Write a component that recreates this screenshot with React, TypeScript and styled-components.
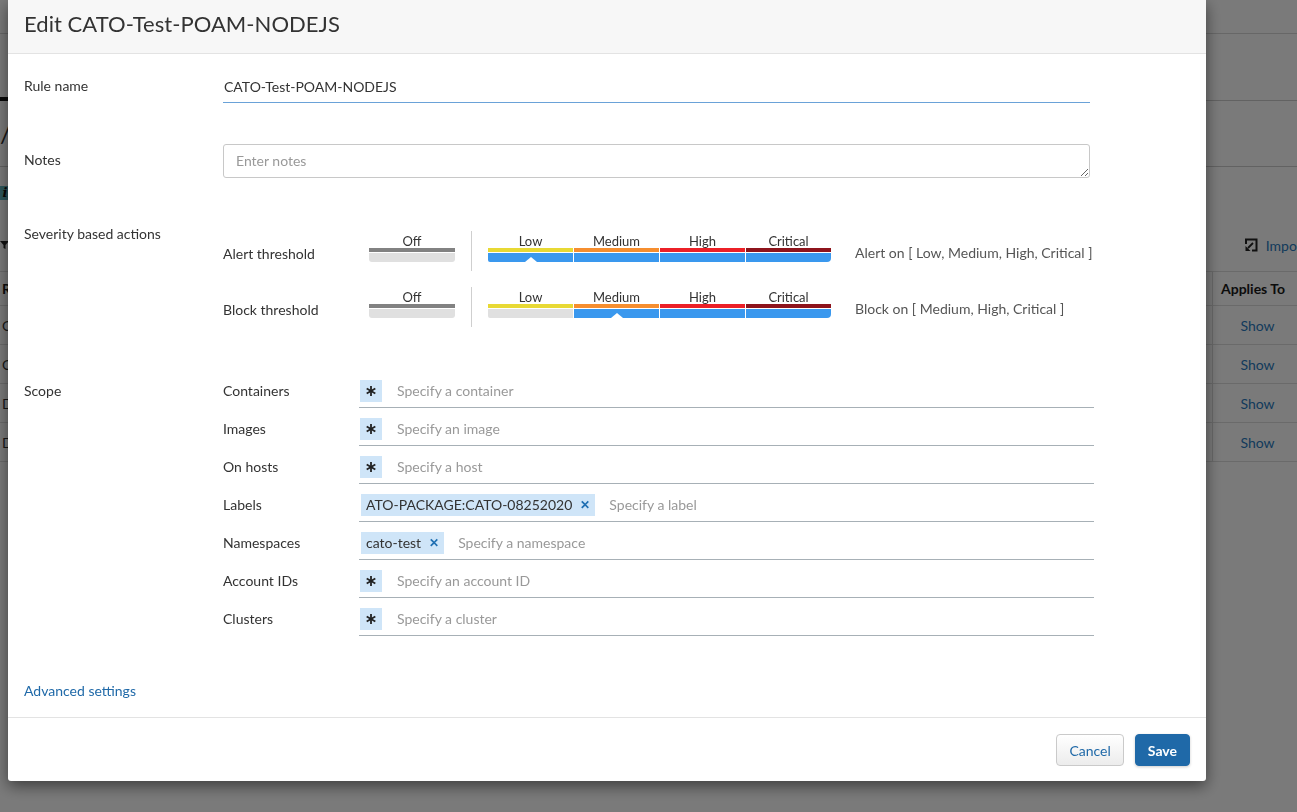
import React from "react";
import styled, { createGlobalStyle } from "styled-components";

const GlobalStyle = createGlobalStyle`
  html, body { margin: 0; padding: 0; }
  body {
    font-family: Lato, "Open Sans", "Liberation Sans", sans-serif;
    font-size: 14px;
    color: #333;
    overflow: hidden;
    background: #fff;
  }
  * { box-sizing: border-box; }
`;

/* ---------- background page ---------- */
const Page = styled.div`
  width: 1340px;
  height: 812px;
  overflow: hidden;
  background: #fff;
  display: flex;
  flex-direction: column;
`;
const PageTop = styled.div`
  flex: none;
  height: 34px;
  border-bottom: 1px solid #d8d8d8;
`;
const Tabs = styled.div`
  flex: none;
  height: 67px;
  border-bottom: 1px solid #ccc;
  display: flex;
  align-items: flex-end;
`;
const ActiveTab = styled.div`
  width: 140px;
  height: 4px;
  background: #111;
  margin-bottom: -1px;
`;
const TitleRow = styled.div`
  flex: none;
  height: 66px;
  border-bottom: 1px solid #ccc;
  display: flex;
  align-items: center;
  font-size: 24px;
  color: #333;
`;
const Banner = styled.div`
  flex: none;
  margin-top: 18px;
  height: 15px;
  display: flex;
  align-items: center;
`;
const InfoIcon = styled.span`
  width: 10px;
  height: 14px;
  background: #5fb5bf;
  color: #111;
  font-style: italic;
  font-weight: 900;
  font-size: 13px;
  line-height: 14px;
  font-family: "DejaVu Serif", serif;
  display: flex;
  align-items: center;
  justify-content: center;
`;
const Toolbar = styled.div`
  flex: none;
  margin-top: 34px;
  height: 22px;
  display: flex;
  align-items: center;
  justify-content: space-between;
  padding-right: 33px;
`;
const ImportLink = styled.span`
  display: flex;
  align-items: center;
  gap: 8px;
  color: #2a7bc0;
  font-size: 14px;
`;
const Table = styled.div`
  flex: none;
  margin-top: 15px;
  border-top: 1px solid #ddd;
`;
const TRow = styled.div<{ $head?: boolean }>`
  display: grid;
  grid-template-columns: 1212px 90px 38px;
  height: ${(p) => (p.$head ? "34px" : "39px")};
  border-bottom: 1px solid #ddd;
  font-weight: ${(p) => (p.$head ? 700 : 400)};
  color: ${(p) => (p.$head ? "#1a1a1a" : "#333")};
`;
const TCell = styled.div<{ $center?: boolean; $line?: boolean; $pl?: number }>`
  display: flex;
  align-items: center;
  justify-content: ${(p) => (p.$center ? "center" : "flex-start")};
  padding-left: ${(p) => p.$pl ?? 2}px;
  border-left: ${(p) => (p.$line ? "1px solid #ddd" : "none")};
  white-space: nowrap;
  overflow: hidden;
`;
const ShowLink = styled.span`
  color: #2a7bc0;
`;

const Backdrop = styled.div`
  position: fixed;
  inset: 0;
  background: rgba(0, 0, 0, 0.52);
`;

/* ---------- modal ---------- */
const Modal = styled.div`
  position: fixed;
  top: 0;
  left: 8px;
  width: 1198px;
  background: #fff;
  border-radius: 0 0 3px 3px;
  box-shadow: 0 5px 15px rgba(0, 0, 0, 0.5);
  display: flex;
  flex-direction: column;
`;
const Header = styled.div`
  height: 54px;
  padding: 10px 16px 0;
  background: #f7f7f7;
  border-bottom: 1px solid #e3e3e3;
`;
const Title = styled.h4`
  margin: 0;
  font-size: 22px;
  line-height: 28px;
  font-weight: 400;
  color: #333;
  letter-spacing: 0.05px;
`;
const Body = styled.div`
  padding: 17px 16px 17px;
  display: flex;
  flex-direction: column;
`;
const FormRow = styled.div<{ $mt?: number; $center?: boolean }>`
  display: grid;
  grid-template-columns: 199px 1fr;
  align-items: ${(p) => (p.$center ? "center" : "start")};
  margin-top: ${(p) => p.$mt ?? 0}px;
`;
const Label = styled.div<{ $mt?: number; $pb?: number }>`
  font-size: 14px;
  line-height: 17px;
  color: #333;
  margin-top: ${(p) => p.$mt ?? 0}px;
  padding-bottom: ${(p) => p.$pb ?? 0}px;
`;
const TextInput = styled.input`
  width: 867px;
  height: 32px;
  border: none;
  border-bottom: 1px solid #6aa2d8;
  outline: none;
  padding: 0 1px;
  font-family: inherit;
  font-size: 14px;
  color: #333;
  background: transparent;
`;
const NotesArea = styled.textarea`
  width: 867px;
  height: 34px;
  border: 1px solid #c8c8c8;
  border-radius: 3px;
  padding: 6px 12px;
  font-family: inherit;
  font-size: 14px;
  line-height: 20px;
  color: #333;
  resize: vertical;
  display: block;
  &::placeholder { color: #999; }
`;
const SevContent = styled.div`
  padding-top: 5px;
  display: flex;
  flex-direction: column;
  gap: 16px;
`;
const SevRow = styled.div`
  display: flex;
  height: 40px;
`;
const SevLabel = styled.div`
  width: 146px;
  padding-top: 14px;
  line-height: 17px;
  font-size: 14px;
`;
const Slider = styled.div`
  display: flex;
  gap: 1px;
`;
const Segment = styled.div`
  width: 85px;
  display: flex;
  flex-direction: column;
  padding-top: 3px;
`;
const OffSegment = styled(Segment)`
  width: 86px;
`;
const SegLabel = styled.div`
  font-size: 13px;
  line-height: 14px;
  height: 14px;
  text-align: center;
  color: #333;
`;
const TopBar = styled.div<{ $color: string }>`
  height: 4px;
  background: ${(p) => p.$color};
`;
const BottomBar = styled.div<{ $on: boolean; $radius: string }>`
  position: relative;
  margin-top: 1px;
  height: 9px;
  background: ${(p) => (p.$on ? "#3a98ee" : "#e0e0e0")};
  border-radius: ${(p) => p.$radius};
`;
const Notch = styled.span`
  position: absolute;
  left: 50%;
  bottom: 0;
  margin-left: -6px;
  width: 0;
  height: 0;
  border-left: 6px solid transparent;
  border-right: 6px solid transparent;
  border-bottom: 5px solid #fff;
`;
const Divider = styled.div`
  width: 1px;
  background: #cfcfcf;
  margin: 0 16px;
`;
const SevText = styled.div`
  margin-left: 24px;
  padding-top: 13px;
  line-height: 17px;
  font-size: 14px;
  color: #555;
`;
const ScopeList = styled.div`
  display: flex;
  flex-direction: column;
`;
const ScopeRow = styled.div`
  display: flex;
`;
const ScopeLabel = styled.div`
  width: 136px;
  padding-top: 12px;
  line-height: 17px;
  font-size: 14px;
`;
const ScopeInput = styled.div`
  width: 735px;
  height: 38px;
  padding: 10px 0 5px 1px;
  border-bottom: 1px solid #a7b0b6;
  display: flex;
  align-items: center;
`;
const StarChip = styled.span`
  width: 22px;
  height: 22px;
  background: #cfe5f8;
  display: flex;
  align-items: center;
  justify-content: center;
  flex: none;
`;
const TagChip = styled.span`
  height: 22px;
  background: #cfe5f8;
  padding: 0 5px;
  margin-left: 1px;
  display: flex;
  align-items: center;
  font-size: 14px;
  line-height: 22px;
  color: #333;
  flex: none;
`;
const TagX = styled.span`
  margin-left: 8px;
  color: #1f6fb2;
  font-weight: 700;
  font-size: 12px;
`;
const Placeholder = styled.span<{ $ml?: number }>`
  margin-left: ${(p) => p.$ml ?? 15}px;
  color: #999;
  font-size: 14px;
  line-height: 20px;
  margin-top: -0.5px;
`;
const AdvancedLink = styled.a`
  margin-top: 46px;
  line-height: 17px;
  padding-bottom: 1px;
  font-size: 14px;
  color: #1f69a8;
  text-decoration: none;
  align-self: flex-start;
`;
const Footer = styled.div`
  border-top: 1px solid #e3e3e3;
  padding: 16px 16px 15px;
  display: flex;
  justify-content: flex-end;
  gap: 11px;
`;
const Button = styled.button<{ $primary?: boolean }>`
  height: 32px;
  padding: 0 12px;
  border-radius: 4px;
  font-family: inherit;
  font-size: 14px;
  font-weight: ${(p) => (p.$primary ? 700 : 400)};
  color: ${(p) => (p.$primary ? "#fff" : "#1f69a8")};
  background: ${(p) => (p.$primary ? "#1f69a8" : "linear-gradient(#ffffff, #ececec)")};
  border: 1px solid ${(p) => (p.$primary ? "#1f69a8" : "#cacaca")};
  box-shadow: ${(p) => (p.$primary ? "0 1px 3px rgba(0,0,0,0.2)" : "none")};
`;

const Star = () => (
  <svg width="10" height="10" viewBox="0 0 10 10">
    <g stroke="#222" strokeWidth="1.8" strokeLinecap="butt">
      <line x1="5" y1="0" x2="5" y2="10" />
      <line x1="0.7" y1="2.5" x2="9.3" y2="7.5" />
      <line x1="0.7" y1="7.5" x2="9.3" y2="2.5" />
    </g>
  </svg>
);

const FilterIcon = () => (
  <svg width="10" height="10" viewBox="0 0 10 10">
    <path d="M0 1 H9 L5.5 5 V9 L3.5 8 V5 Z" fill="#222" />
  </svg>
);

const ImportIcon = () => (
  <svg width="14" height="14" viewBox="0 0 14 14">
    <path d="M2 6 V1.5 H12.5 V12.5 H8" fill="none" stroke="#222" strokeWidth="2" />
    <path d="M9 5 L4 10" stroke="#222" strokeWidth="1.8" />
    <path d="M1.5 8 V13 H6.5 Z" fill="#222" />
  </svg>
);

const LEVELS = [
  { name: "Low", color: "#e8d934" },
  { name: "Medium", color: "#f68e2f" },
  { name: "High", color: "#ec2027" },
  { name: "Critical", color: "#8e141c" },
];

const Threshold = ({ label, level, text }: { label: string; level: number; text: string }) => (
  <SevRow>
    <SevLabel>{label}</SevLabel>
    <OffSegment>
      <SegLabel>Off</SegLabel>
      <TopBar $color="#828282" />
      <BottomBar $on={false} $radius="0 0 3px 3px" />
    </OffSegment>
    <Divider />
    <Slider>
      {LEVELS.map((l, i) => (
        <Segment key={l.name}>
          <SegLabel>{l.name}</SegLabel>
          <TopBar $color={l.color} />
          <BottomBar
            $on={i >= level}
            $radius={i === 0 ? "0 0 0 2px" : i === LEVELS.length - 1 ? "0 0 4px 0" : "0"}
          >
            {i === level && <Notch />}
          </BottomBar>
        </Segment>
      ))}
    </Slider>
    <SevText>{text}</SevText>
  </SevRow>
);

type Scope = { label: string; tag?: string; placeholder: string };
const SCOPES: Scope[] = [
  { label: "Containers", placeholder: "Specify a container" },
  { label: "Images", placeholder: "Specify an image" },
  { label: "On hosts", placeholder: "Specify a host" },
  { label: "Labels", tag: "ATO-PACKAGE:CATO-08252020", placeholder: "Specify a label" },
  { label: "Namespaces", tag: "cato-test", placeholder: "Specify a namespace" },
  { label: "Account IDs", placeholder: "Specify an account ID" },
  { label: "Clusters", placeholder: "Specify a cluster" },
];

const ROWS = ["CATO", "CATO", "Def", "Def"];

export default function App() {
  return (
    <>
      <GlobalStyle />
      <Page>
        <PageTop />
        <Tabs>
          <ActiveTab />
        </Tabs>
        <TitleRow>/ Runtime Policies</TitleRow>
        <Banner>
          <InfoIcon>i</InfoIcon>
        </Banner>
        <Toolbar>
          <FilterIcon />
          <ImportLink>
            <ImportIcon />
            Import
          </ImportLink>
        </Toolbar>
        <Table>
          <TRow $head>
            <TCell>Rule</TCell>
            <TCell $line $pl={8}>Applies To</TCell>
            <TCell />
          </TRow>
          {ROWS.map((r, i) => (
            <TRow key={i}>
              <TCell>{r}</TCell>
              <TCell $line $center $pl={0}>
                <ShowLink>Show</ShowLink>
              </TCell>
              <TCell />
            </TRow>
          ))}
        </Table>
      </Page>
      <Backdrop />
      <Modal>
        <Header>
          <Title>Edit CATO-Test-POAM-NODEJS</Title>
        </Header>
        <Body>
          <FormRow $center>
            <Label $pb={4}>Rule name</Label>
            <TextInput defaultValue="CATO-Test-POAM-NODEJS" />
          </FormRow>
          <FormRow $center $mt={41}>
            <Label $pb={4}>Notes</Label>
            <NotesArea placeholder="Enter notes" />
          </FormRow>
          <FormRow $mt={48}>
            <Label $mt={-1}>Severity based actions</Label>
            <SevContent>
              <Threshold label="Alert threshold" level={0} text="Alert on [ Low, Medium, High, Critical ]" />
              <Threshold label="Block threshold" level={1} text="Block on [ Medium, High, Critical ]" />
            </SevContent>
          </FormRow>
          <FormRow $mt={43}>
            <Label $mt={12}>Scope</Label>
            <ScopeList>
              {SCOPES.map((s) => (
                <ScopeRow key={s.label}>
                  <ScopeLabel>{s.label}</ScopeLabel>
                  <ScopeInput>
                    {s.tag ? (
                      <TagChip>
                        {s.tag}
                        <TagX>✕</TagX>
                      </TagChip>
                    ) : (
                      <StarChip>
                        <Star />
                      </StarChip>
                    )}
                    <Placeholder $ml={s.tag ? 14 : 15}>{s.placeholder}</Placeholder>
                  </ScopeInput>
                </ScopeRow>
              ))}
            </ScopeList>
          </FormRow>
          <AdvancedLink href="#">Advanced settings</AdvancedLink>
        </Body>
        <Footer>
          <Button>Cancel</Button>
          <Button $primary>Save</Button>
        </Footer>
      </Modal>
    </>
  );
}
